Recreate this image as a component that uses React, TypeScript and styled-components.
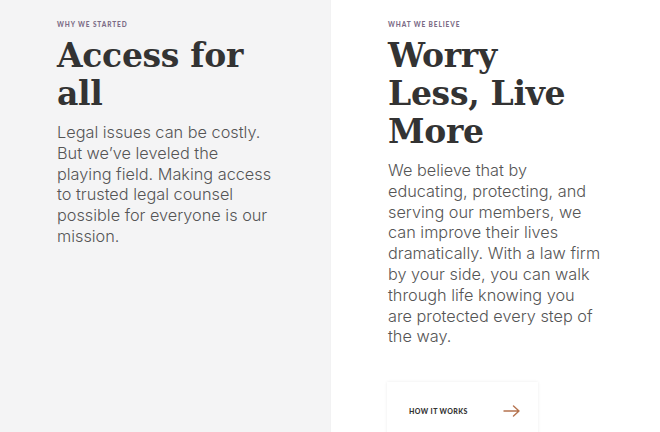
import styled, { createGlobalStyle } from 'styled-components';

const GlobalStyle = createGlobalStyle`
  html, body {
    margin: 0;
    padding: 0;
    background: #fff;
  }
  body {
    font-family: 'Inter', 'Liberation Sans', sans-serif;
    -webkit-font-smoothing: antialiased;
  }
`;

// #region styled
const Page = styled.main`
  height: 432px;
  overflow: hidden;
`;

const Section = styled.section`
  display: grid;
  grid-template-columns: 330px 330px;
  height: 414px;
  box-shadow: 0 1px 2px rgba(0, 0, 0, 0.04);
`;

const Column = styled.div<{ $tone: 'grey' | 'white' }>`
  display: flex;
  flex-direction: column;
  align-items: flex-start;
  padding: 20px 57px 0 57px;
  background-color: ${p => (p.$tone === 'grey' ? '#f4f4f5' : '#ffffff')};
  border-left: ${p => (p.$tone === 'white' ? '1px solid #f2f2f3' : 'none')};
`;

const Eyebrow = styled.span`
  font-family: 'Lato', sans-serif;
  font-weight: 900;
  font-size: 6.5px;
  line-height: 9px;
  letter-spacing: 0.9px;
  text-transform: uppercase;
  color: #7b6c86;
`;

const Heading = styled.h2`
  max-width: 200px;
  margin: 8px 0 0;
  font-family: 'DejaVu Serif', 'Liberation Serif', serif;
  font-weight: 700;
  font-size: 33px;
  line-height: 38px;
  letter-spacing: -0.3px;
  color: #333333;
`;

const Body = styled.p`
  margin: 9px 0 0;
  font-family: 'Inter', sans-serif;
  font-weight: 300;
  font-size: 16.3px;
  line-height: 20.8px;
  color: #555555;
`;

const LinkCard = styled.a`
  display: flex;
  align-items: center;
  justify-content: space-between;
  box-sizing: border-box;
  width: 151px;
  height: 58px;
  margin: 35px 0 0 -1px;
  padding: 0 18px 0 22px;
  background: #ffffff;
  box-shadow: 0 0 3px rgba(0, 0, 0, 0.08);
  text-decoration: none;
  flex-shrink: 0;
`;

const LinkLabel = styled.span`
  font-family: 'Lato', sans-serif;
  font-weight: 900;
  font-size: 7px;
  letter-spacing: 0.4px;
  text-transform: uppercase;
  color: #333333;
`;
// #endregion

const Arrow = () => (
  <svg width="17" height="12" viewBox="0 0 17 12" fill="none" stroke="#b5734f" strokeWidth="1.4" strokeLinecap="round" strokeLinejoin="round">
    <path d="M1 6h15M10.5 1l5.5 5-5.5 5" />
  </svg>
);

const App = () => (
  <Page>
    <GlobalStyle />
    <Section>
      <Column $tone="grey">
        <Eyebrow>Why we started</Eyebrow>
        <Heading>Access for all</Heading>
        <Body>
          Legal issues can be costly. But we’ve leveled the playing field. Making access to trusted legal counsel
          possible for everyone is our mission.
        </Body>
      </Column>
      <Column $tone="white">
        <Eyebrow>What we believe</Eyebrow>
        <Heading>Worry Less, Live More</Heading>
        <Body>
          We believe that by educating, protecting, and serving our members, we can improve their lives dramatically.
          With a law firm by your side, you can walk through life knowing you are protected every step of the way.
        </Body>
        <LinkCard href="#">
          <LinkLabel>How it works</LinkLabel>
          <Arrow />
        </LinkCard>
      </Column>
    </Section>
  </Page>
);

export default App;
